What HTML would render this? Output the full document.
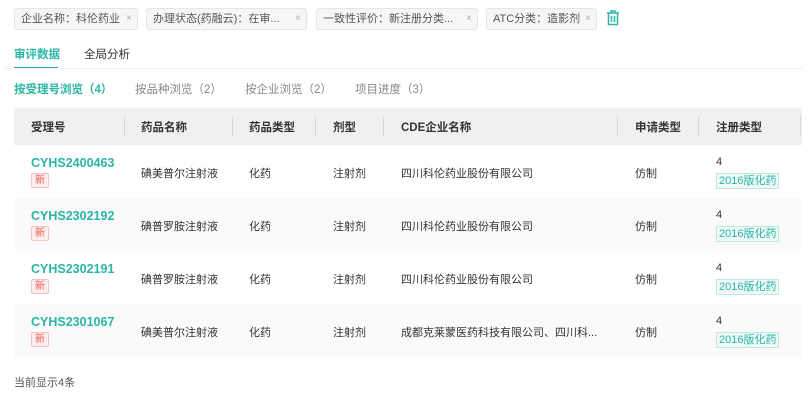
<!DOCTYPE html>
<html><head><meta charset="utf-8"><style>
*{margin:0;padding:0;box-sizing:border-box}
body{width:811px;height:402px;background:#fff;font-family:"Liberation Sans","Noto Sans CJK SC",sans-serif;font-size:11px;color:#333;position:relative;overflow:hidden}
.a{position:absolute;white-space:nowrap}
.tag{position:absolute;top:8px;height:22px;border:1px solid #e4e6e8;background:#f5f6f7;border-radius:3px;color:#555;font-size:11px;line-height:20px;padding-left:6px;white-space:nowrap}
.tag i{position:absolute;right:5px;top:0;font-style:normal;color:#aaa;font-size:10px}
.hd{position:absolute;top:108px;left:14px;width:788px;height:37px;background:#eef0f2;border-radius:4px 4px 0 0}
.th{position:absolute;top:119px;font-weight:bold;color:#333;font-size:11.5px}
.dv{position:absolute;top:116px;width:1px;height:20px;background:#d6d9dc}
.row{position:absolute;left:14px;width:788px;height:53px}
.id{position:absolute;font-weight:bold;color:#2bb5a5;font-size:12.5px}
.new{position:absolute;width:18px;height:15px;border:1px solid #f6c3c3;background:#fdeeee;color:#e55;font-size:10px;line-height:13px;text-align:center;border-radius:2px}
.reg{position:absolute;height:16px;border:1px solid #bfe8e1;background:#eefaf8;color:#2bb5a5;font-size:11px;line-height:14px;padding:0 2px}
</style></head><body>
<div class="tag" style="left:14px;width:124px">企业名称：科伦药业<i>×</i></div>
<div class="tag" style="left:146px;width:161px">办理状态(药融云)：在审...<i>×</i></div>
<div class="tag" style="left:316px;width:162px">一致性评价：新注册分类...<i>×</i></div>
<div class="tag" style="left:486px;width:111px">ATC分类：造影剂<i>×</i></div>
<svg class="a" style="left:606px;top:10px" width="14" height="16" viewBox="0 0 14 16" fill="none" stroke="#2bb5a5" stroke-width="1.5"><path d="M1 3h12M5 3V1h4v2M2.5 3v11.5h9V3M5.5 6v6M8.5 6v6"/></svg>
<div class="a" style="left:14px;top:46px;color:#2bb5a5;font-weight:bold;font-size:11.5px">审评数据</div>
<div class="a" style="left:84px;top:46px;color:#333;font-size:11.5px">全局分析</div>
<div class="a" style="left:14px;top:67px;width:44px;height:2px;background:#2bb5a5"></div>
<div class="a" style="left:3px;top:68px;width:800px;height:1px;background:#eef0f2"></div>
<div class="a" style="left:14px;top:81px;color:#2bb5a5;font-weight:bold;font-size:11.5px">按受理号浏览（4）</div>
<div class="a" style="left:135px;top:81px;color:#888;font-size:11.5px">按品种浏览（2）</div>
<div class="a" style="left:245px;top:81px;color:#888;font-size:11.5px">按企业浏览（2）</div>
<div class="a" style="left:355px;top:81px;color:#888;font-size:11.5px">项目进度（3）</div>
<div class="hd"></div>
<div class="th" style="left:31px">受理号</div>
<div class="th" style="left:141px">药品名称</div>
<div class="th" style="left:249px">药品类型</div>
<div class="th" style="left:333px">剂型</div>
<div class="th" style="left:401px">CDE企业名称</div>
<div class="th" style="left:635px">申请类型</div>
<div class="th" style="left:716px">注册类型</div>
<div class="dv" style="left:124px"></div><div class="dv" style="left:232px"></div><div class="dv" style="left:315px"></div><div class="dv" style="left:383px"></div><div class="dv" style="left:617px"></div><div class="dv" style="left:698px"></div><div class="dv" style="left:800px"></div>

<div class="row" style="top:145px;background:#fff"></div>
<div class="row" style="top:198px;background:#fafafa"></div>
<div class="row" style="top:251px;background:#fff"></div>
<div class="row" style="top:304px;background:#fafafa"></div>

<div class="id" style="left:31px;top:156px">CYHS2400463</div><div class="new" style="left:31px;top:173px">新</div>
<div class="a" style="left:141px;top:165px">碘美普尔注射液</div><div class="a" style="left:249px;top:165px">化药</div><div class="a" style="left:333px;top:165px">注射剂</div><div class="a" style="left:401px;top:165px">四川科伦药业股份有限公司</div><div class="a" style="left:635px;top:165px">仿制</div>
<div class="a" style="left:716px;top:156px">4</div><div class="reg" style="left:716px;top:173px">2016版化药</div>

<div class="id" style="left:31px;top:209px">CYHS2302192</div><div class="new" style="left:31px;top:226px">新</div>
<div class="a" style="left:141px;top:218px">碘普罗胺注射液</div><div class="a" style="left:249px;top:218px">化药</div><div class="a" style="left:333px;top:218px">注射剂</div><div class="a" style="left:401px;top:218px">四川科伦药业股份有限公司</div><div class="a" style="left:635px;top:218px">仿制</div>
<div class="a" style="left:716px;top:209px">4</div><div class="reg" style="left:716px;top:226px">2016版化药</div>

<div class="id" style="left:31px;top:262px">CYHS2302191</div><div class="new" style="left:31px;top:279px">新</div>
<div class="a" style="left:141px;top:271px">碘普罗胺注射液</div><div class="a" style="left:249px;top:271px">化药</div><div class="a" style="left:333px;top:271px">注射剂</div><div class="a" style="left:401px;top:271px">四川科伦药业股份有限公司</div><div class="a" style="left:635px;top:271px">仿制</div>
<div class="a" style="left:716px;top:262px">4</div><div class="reg" style="left:716px;top:279px">2016版化药</div>

<div class="id" style="left:31px;top:315px">CYHS2301067</div><div class="new" style="left:31px;top:332px">新</div>
<div class="a" style="left:141px;top:324px">碘美普尔注射液</div><div class="a" style="left:249px;top:324px">化药</div><div class="a" style="left:333px;top:324px">注射剂</div><div class="a" style="left:401px;top:324px">成都克莱蒙医药科技有限公司、四川科...</div><div class="a" style="left:635px;top:324px">仿制</div>
<div class="a" style="left:716px;top:315px">4</div><div class="reg" style="left:716px;top:332px">2016版化药</div>

<div class="a" style="left:14px;top:374px;color:#555;font-size:11px">当前显示4条</div>
</body></html>
